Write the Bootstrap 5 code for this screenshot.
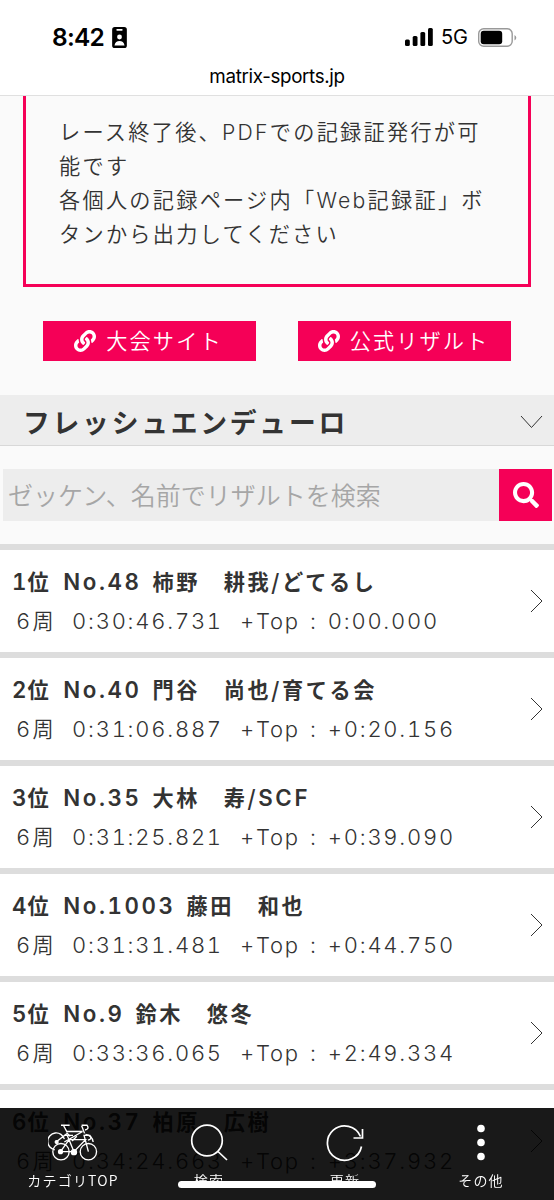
<!DOCTYPE html>
<html lang="ja">
<head>
<meta charset="utf-8">
<meta name="viewport" content="width=device-width, initial-scale=1">
<title>matrix-sports.jp</title>
<link href="https://cdn.jsdelivr.net/npm/bootstrap@5.3.0/dist/css/bootstrap.min.css" rel="stylesheet">
<style>
html,body{height:1200px;overflow:hidden}
body{background:#fafafa;color:#333;font-family:"Noto Sans CJK JP",sans-serif;font-weight:350;font-size:21.2px;letter-spacing:2.25px;line-height:34px}
svg{display:block;flex:none}
.top-bar{height:96px;border-bottom:1px solid #e0e0e0;color:#000;font-family:Inter,sans-serif;letter-spacing:0}
.status{height:58px;padding:16px 37px 0 52px}
.clock{font-size:24.5px;font-weight:600;letter-spacing:-.8px;line-height:42px}
.net{font-size:20px;font-weight:400;line-height:42px;margin:0 10px 0 8px}
.host{font-size:18.8px;font-weight:400;letter-spacing:-.35px;line-height:37px}
.notice{margin:0 23px;height:190.5px;border:3px solid #f50057;border-top:0;padding:18px 0 0 33px;background:#fafafa;white-space:nowrap}
.l{font-family:Inter,sans-serif;line-height:1;font-feature-settings:"tnum"}
.links{padding:34.5px 43px 34px;gap:42px}
.btn-pink{background:#f50057;color:#fff;border-radius:0;border:0;height:40px;padding:0;flex:1;font-weight:350;font-size:21.2px;letter-spacing:2.1px;line-height:40px}
.btn-pink svg{margin:0 10px 0 -2px}
.btn-pink span{position:relative;top:-1px}
.cat{height:51px;background:#ededed;border-bottom:1px solid #d8d8d8;padding:3px 11px 0 23px}
.cat h1{font-size:26.8px;font-weight:700;letter-spacing:2.75px;line-height:50px;margin:0}
.find{margin:23px 2px 23px 3px;height:52px;width:auto}
.find .form-control{background:#ededed;border:0;border-radius:0;font-size:25px;font-weight:350;padding:0 0 0 5px;letter-spacing:0}
.find .form-control::placeholder{color:#a6a6a6;opacity:1}
.find .btn{background:#f50057;border:0;border-radius:0!important;width:53px;padding:0 0 0 14px}
.list-group-item.res{height:108px;border:0;border-top:6px solid #ddd;border-radius:0;margin:0;background:#fff;color:#333;padding:12px 11px 0 12px;white-space:pre}
.nm{font-weight:700;height:39px;line-height:38px;letter-spacing:2.55px}
.nm .l{font-weight:600;font-size:22.3px;letter-spacing:2.6px}
.nm .l:first-child{letter-spacing:1px}
.tm{line-height:38px;padding-left:4px;height:38px}
.tm .l{font-size:22px;letter-spacing:1.75px;word-spacing:2.5px}
.tm .l:first-child{letter-spacing:2.3px}
.no{display:inline-block;margin:0 11px 0 12px}
.t{display:inline-block;width:168px}
.foot{height:92px;padding:14px 5px 0;background:rgba(0,0,0,.9);color:#fff;font-size:14px;line-height:20px;letter-spacing:1.2px}
.foot a{color:#fff;text-decoration:none;white-space:nowrap;flex:1 1 0}
.foot svg{height:42px;margin:0 auto 6px}
.home{position:absolute;left:178px;top:73px;width:198px;height:7px;border-radius:4px;background:#fff}
</style>
</head>
<body>
<header class="top-bar bg-white">
 <div class="status d-flex align-items-center">
  <span class="clock">8:42</span>
  <svg class="ms-2" width="15" height="21" viewBox="0 0 14 20"><rect width="14" height="20" rx="2.5"/><rect x="4" y="2" width="6" height="1.5" rx=".7" fill="#fff"/><circle cx="7" cy="9.5" r="2.3" fill="#fff"/><path d="M2.2 17.5c.4-3 2.4-4.2 4.8-4.2s4.400 1.200 4.800 4.200z" fill="#fff"/></svg>
  <svg class="ms-auto" width="28" height="18" viewBox="0 0 28 18"><rect y="11.500" width="4.800" height="6.500" rx="1.500"/><rect x="7.700" y="8" width="4.800" height="10" rx="1.500"/><rect x="15.400" y="4" width="4.800" height="14" rx="1.500"/><rect x="23" width="4.800" height="18" rx="1.500"/></svg>
  <span class="net">5G</span>
  <svg width="39" height="19" viewBox="0 0 39 19"><rect x=".7" y=".7" width="33.500" height="17.600" rx="5" fill="none" stroke="#999" stroke-width="1.400"/><rect x="2.700" y="2.700" width="21.500" height="13.600" rx="3"/><path d="M36.500 7v5.500q1.800-1 1.800-2.700T36.500 7z" fill="#999"/></svg>
 </div>
 <div class="host text-center">matrix-sports.jp</div>
</header>
<main>
 <div class="notice">レース終了後、<span class="l">PDF</span>での記録証発行が可<br>能です<br>各個人の記録ページ内「<span class="l">Web</span>記録証」ボ<br>タンから出力してください</div>
 <div class="links d-flex">
  <a class="btn btn-pink d-flex justify-content-center align-items-center"><svg width="22" height="22" viewBox="0 0 512 512" fill="#fff"><use href="#chain"/></svg><span>大会サイト</span></a>
  <a class="btn btn-pink d-flex justify-content-center align-items-center"><svg width="22" height="22" viewBox="0 0 512 512" fill="#fff"><path id="chain" d="M326.612 185.391c59.747 59.809 58.927 155.698.36 214.59-.11.12-.24.25-.36.37l-67.2 67.2c-59.27 59.27-155.699 59.262-214.96 0-59.27-59.26-59.27-155.7 0-214.96l37.106-37.106c9.84-9.84 26.786-3.3 27.294 10.606.648 17.722 3.826 35.527 9.69 52.721 1.986 5.822.567 12.262-3.783 16.612l-13.087 13.087c-28.026 28.026-28.905 73.66-1.155 101.96 28.024 28.579 74.086 28.749 102.325.51l67.2-67.19c28.191-28.191 28.073-73.757 0-101.83-3.701-3.694-7.429-6.564-10.341-8.569a16.037 16.037 0 0 1-6.947-12.606c-.396-10.567 3.348-21.456 11.698-29.806l21.054-21.055c5.521-5.521 14.182-6.199 20.584-1.731a152.482 152.482 0 0 1 20.522 17.197zM467.547 44.449c-59.261-59.262-155.69-59.27-214.96 0l-67.2 67.2c-.12.12-.25.25-.36.37-58.566 58.892-59.387 154.781.36 214.59a152.454 152.454 0 0 0 20.521 17.196c6.402 4.468 15.064 3.789 20.584-1.731l21.054-21.055c8.35-8.35 12.094-19.239 11.698-29.806a16.037 16.037 0 0 0-6.947-12.606c-2.912-2.005-6.64-4.875-10.341-8.569-28.073-28.073-28.191-73.639 0-101.83l67.2-67.19c28.239-28.239 74.3-28.069 102.325.51 27.75 28.3 26.872 73.934-1.155 101.96l-13.087 13.087c-4.35 4.35-5.769 10.79-3.783 16.612 5.864 17.194 9.042 34.999 9.69 52.721.509 13.906 17.454 20.446 27.294 10.606l37.106-37.106c59.271-59.259 59.271-155.699.001-214.959z"/></svg><span>公式リザルト</span></a>
 </div>
 <div class="cat d-flex justify-content-between align-items-center"><h1>フレッシュエンデューロ</h1><svg width="23" height="14" viewBox="0 0 23 14" fill="none" stroke="#333"><path d="M1 1l10.500 11.500L22 1"/></svg></div>
 <div class="find input-group flex-nowrap"><input class="form-control" placeholder="ゼッケン、名前でリザルトを検索"><button class="btn"><svg width="26" height="26" viewBox="0 0 512 512" fill="#fff"><path d="M505 442.700L405.300 343c-4.500-4.500-10.600-7-17-7H372c27.600-35.300 44-79.700 44-128C416 93.100 322.900 0 208 0S0 93.100 0 208s93.100 208 208 208c48.300 0 92.700-16.400 128-44v16.300c0 6.400 2.500 12.500 7 17l99.700 99.700c9.400 9.400 24.600 9.400 33.900 0l28.300-28.300c9.400-9.400 9.400-24.600.1-34zM208 336c-70.700 0-128-57.200-128-128 0-70.700 57.200-128 128-128 70.700 0 128 57.200 128 128 0 70.700-57.200 128-128 128z"/></svg></button></div>
 <div class="list-group" id="results"></div>
</main>
<footer class="foot fixed-bottom d-flex text-center align-items-start">
 <a><svg width="50" viewBox="0 0 52 42" fill="none" stroke="#fff" stroke-width="1.400">
  <path d="M7 28A8.800 8.800 0 1 1 17 17M9 19.500l11-8.500 3 3M19 9h17M20 10l-4-7.500m-2.500 0h9M36 9l-19 11M35 2.500h5.500q3 4-2 5M35 3l3 8M39 12a9 9 0 0 1 8 8M30 14l-5 5"/><circle cx="9" cy="20" r="1.500" fill="#fff"/>
  <circle cx="13.500" cy="30" r="8.500"/><circle cx="42" cy="30" r="8.500"/><path d="M13 30h14L39 17.500H22L13 30M27 30l-7-17m-3 0h9M42 30l-4.500-17h6q3 4-2 5"/><circle cx="13" cy="30" r="2" fill="#fff"/><circle cx="27" cy="30.500" r="2.600" fill="#fff"/></svg>カテゴリTOP</a>
 <a><svg width="38" viewBox="0 0 38 42" fill="none" stroke="#fff" stroke-width="1.700"><circle cx="17" cy="18.500" r="15.300"/><path d="M28 29.500l9 8.500"/></svg>検索</a>
 <a><svg width="38" viewBox="0 0 38 42" fill="none" stroke="#fff" stroke-width="1.700"><path d="M35.500 24.500A17.200 17.200 0 1 1 34.500 14.500M36.500 7v9h-9"/></svg>更新</a>
 <a><svg width="10" viewBox="0 0 10 42" fill="#fff"><circle cx="5" cy="6.500" r="3.800"/><circle cx="5" cy="20.500" r="3.800"/><circle cx="5" cy="34.500" r="3.800"/></svg>その他</a>
 <div class="home"></div>
</footer>
<script>
const rows=[["1","48","柿野　耕我/どてるし","0:30:46.731","0:00.000"],["2","40","門谷　尚也/育てる会","0:31:06.887","+0:20.156"],["3","35","大林　寿/<span class=l>SCF</span>","0:31:25.821","+0:39.090"],["4","1003","藤田　和也","0:31:31.481","+0:44.750"],["5","9","鈴木　悠冬","0:33:36.065","+2:49.334"],["6","37","柏原　広樹","0:34:24.663","+3:37.932"]];
document.getElementById("results").innerHTML=rows.map(r=>`<a class="list-group-item res d-flex justify-content-between"><div><div class="nm"><span class="l">${r[0]}</span>位<span class="l no">No.${r[1]}</span>${r[2]}</div><div class="tm"><span class="l">6</span>周<span class="l t ms-3">${r[3]}</span><span class="l">+Top : ${r[4]}</span></div></div><svg style="margin-top:27px" width="13" height="24" viewBox="0 0 13 24" fill="none" stroke="#333"><path d="M1 1l11 11L1 23"/></svg></a>`).join("");
</script>
<script src="https://cdn.jsdelivr.net/npm/bootstrap@5.3.0/dist/js/bootstrap.bundle.min.js"></script>
</body>
</html>
